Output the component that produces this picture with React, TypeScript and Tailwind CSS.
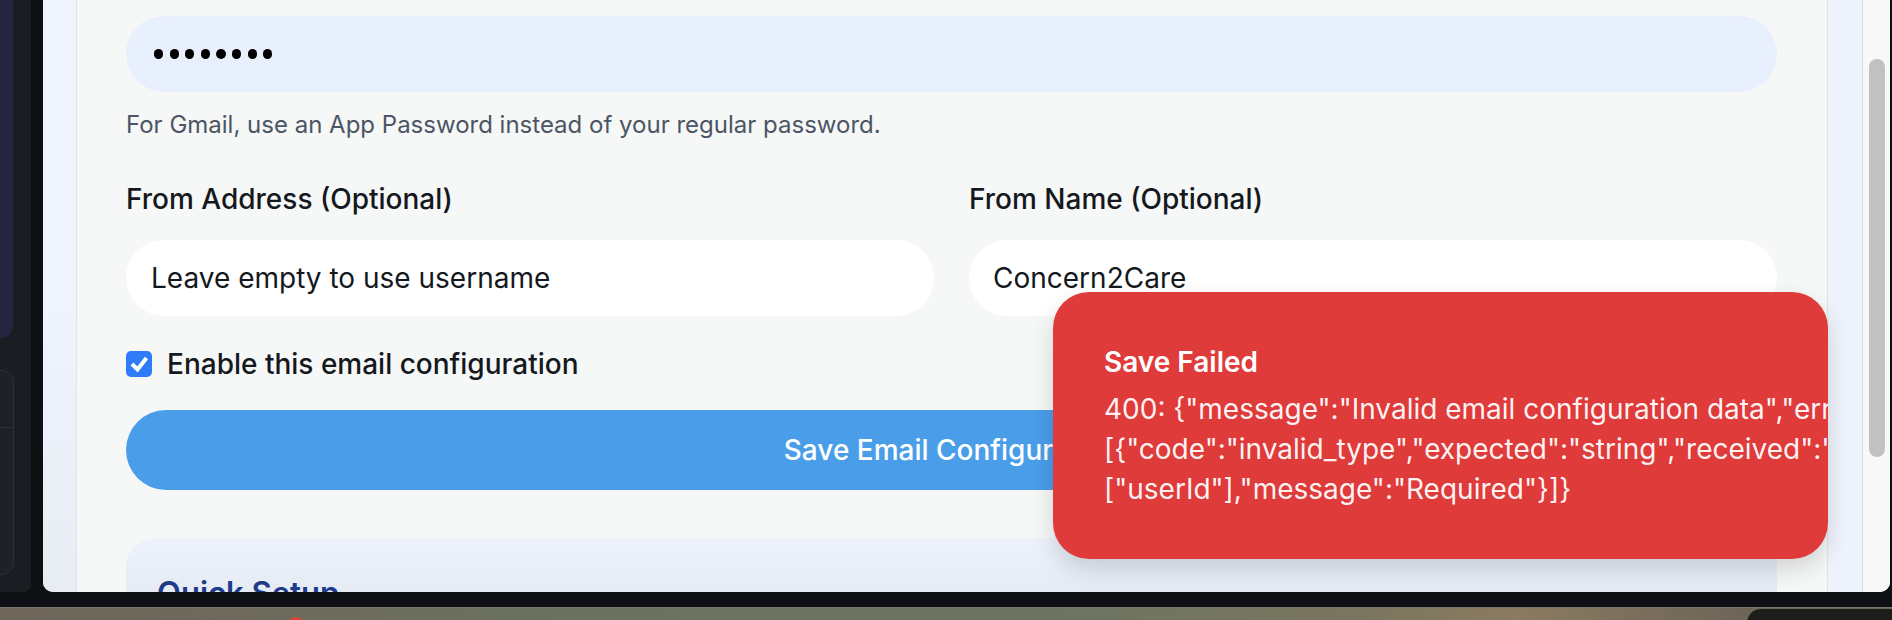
export default function App() {
  const dots = [0, 1, 2, 3, 4, 5, 6, 7];
  return (
    <div className="relative w-[1892px] h-[620px] overflow-hidden bg-[#0e0f13] [font-family:Inter,'Noto_Sans',sans-serif]">
      <div className="flex h-[607px]">
        {/* window behind, left */}
        <div className="w-[43px] shrink-0">
          <div className="relative w-[31px] h-[592px] bg-[#1b1d22] rounded-br-[8px] overflow-hidden">
            <div className="w-[13px] h-[338px] bg-[#26243f] rounded-br-[12px]" />
            <div className="absolute left-[-14px] top-[370px] w-[28px] h-[205px] rounded-[12px] border border-[#2d3038] bg-[#1f2127]">
              <div className="mt-[56px] h-px bg-[#2d3038]" />
            </div>
          </div>
        </div>

        {/* main browser window */}
        <div className="flex w-[1847px] h-[592px] shrink-0 rounded-b-[10px] overflow-hidden bg-[#eff4fd]">
          <div className="w-[33px] shrink-0 bg-gradient-to-b from-[#eff4fd] via-[#eff4fd] to-[#e8ecf3]" />
          <div className="w-[1752px] shrink-0 border-l border-r border-[#e1e5eb] bg-[#f6f7f7] pl-[49px] pr-[50px] pt-[16px]">
            {/* password */}
            <div className="flex h-[76px] items-center rounded-full bg-[#e8effd] pl-[28px] gap-[6.3px]">
              {dots.map((d) => (
                <span key={d} className="block w-[9.3px] h-[9.3px] rounded-full bg-black" />
              ))}
            </div>
            <p className="mt-[17px] text-[24px] leading-[32px] text-[#4b5563]">
              For Gmail, use an App Password instead of your regular password.
            </p>

            <div className="mt-[40px] grid grid-cols-2 gap-[35px]">
              <div>
                <div className="text-[28px] leading-[36px] font-medium text-[#15181d]">From Address (Optional)</div>
                <div className="mt-[23px] flex h-[76px] items-center rounded-full bg-white pl-[25px] text-[28px] text-[#15181d]">
                  Leave empty to use username
                </div>
              </div>
              <div>
                <div className="text-[28px] leading-[36px] font-medium text-[#15181d]">From Name (Optional)</div>
                <div className="mt-[23px] flex h-[76px] items-center rounded-full bg-white pl-[24px] text-[28px] text-[#15181d]">
                  Concern2Care
                </div>
              </div>
            </div>

            <div className="mt-[35px] flex h-[26px] items-center gap-[15px]">
              <div className="flex w-[26px] h-[26px] shrink-0 items-center justify-center rounded-[5px] bg-[#2f7cf6]">
                <svg width="26" height="26" viewBox="0 0 26 26">
                  <polyline points="6,13 11.5,18.5 20.5,7" fill="none" stroke="#ffffff" strokeWidth="4" strokeLinecap="butt" strokeLinejoin="miter" />
                </svg>
              </div>
              <span className="text-[28px] leading-[36px] font-medium text-[#15181d]">Enable this email configuration</span>
            </div>

            <div className="mt-[33px] flex h-[80px] items-center justify-center rounded-full bg-[#4a9de9] text-[28px] font-medium text-white">
              Save Email Configuration
            </div>

            <div className="mt-[48px] h-[120px] rounded-t-[28px] bg-gradient-to-b from-[#edf2fb] to-[#dce2eb] pl-[31px] pt-[35px]">
              <div className="text-[31px] leading-[40px] font-semibold text-[#1e3a8a]">Quick Setup</div>
            </div>
          </div>
          <div className="w-[34px] shrink-0 bg-[#eef3fc]" />
          <div className="w-[28px] shrink-0 border-l border-[#dedede] bg-[#f8f8f8] pt-[59px] pl-[6px]">
            <div className="w-[16px] h-[398px] rounded-full bg-[#c1c1c1]" />
          </div>
        </div>
      </div>

      {/* desktop wallpaper strip */}
      <div className="relative h-[13px] overflow-hidden border-t border-[#7b766b] bg-[linear-gradient(to_right,#6f665a_0%,#6d695c_12%,#6b725f_30%,#6c7562_55%,#7a755f_72%,#8b7b60_80%,#6e6559_92%)]">
        <div className="absolute left-[286px] top-[9px] w-[20px] h-[20px] rounded-full bg-[#d8483a]" />
        <div className="absolute left-[1747px] top-[1px] w-[160px] h-[30px] rounded-tl-[14px] bg-[#1d1e1c]" />
      </div>

      {/* toast */}
      <div className="absolute left-[1053px] top-[292px] w-[775px] h-[267px] overflow-hidden rounded-[36px] bg-[#e03b3b] pl-[51px] pt-[52px] shadow-[0_10px_25px_rgba(0,0,0,0.15)]">
        <div className="text-[28px] leading-[36px] font-semibold text-white whitespace-nowrap">Save Failed</div>
        <div className="mt-[9px] text-[28px] leading-[40px] text-white/95 whitespace-nowrap">
          <div>400: {'{"message":"Invalid email configuration data","errors":'}</div>
          <div>{'[{"code":"invalid_type","expected":"string","received":"undefined","path":'}</div>
          <div>{'["userId"],"message":"Required"}]}'}</div>
        </div>
      </div>
    </div>
  );
}
